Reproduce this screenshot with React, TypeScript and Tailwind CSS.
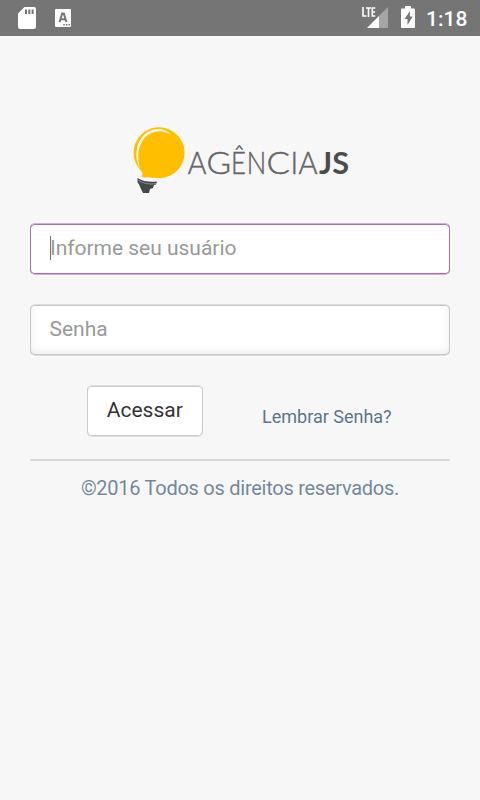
function StatusBar() {
  return (
    <header className="flex h-9 items-center bg-[#757575] text-white">
      <svg className="h-9 w-20" viewBox="0 0 80 36">
        <path d="M24.5 7H34Q36 7 36 9V26.500Q36 29 33.500 29H20.500Q18 29 18 26.500V13.500Z" fill="#fff" />
        <path d="M25 9.500h2v4.500h-2zM28.300 9.500h2v4.500h-2zM31.600 9.500h2v4.500h-2z" fill="#757575" />
        <rect x="55" y="9" width="16" height="18" rx="1" fill="#fff" />
        <path d="M59.600 22L62.200 13.500h1.600l2.600 8.500M60.600 19.300h4.800" fill="none" stroke="#757575" strokeWidth="2" />
        <path d="M63.300 24h1.500v1.400h-1.500zM65.900 24h1.500v1.400h-1.500zM68.500 24H70v1.400h-1.500z" fill="#757575" />
      </svg>
      <svg className="ml-auto h-9 w-[66px]" viewBox="354 0 66 36">
        <path d="M388 7V28H367Z" fill="#a5a5a5" />
        <path d="M379 16V28H367Z" fill="#fff" />
        <path d="M363 7v9h3.500M366 8h5M368.500 8v9M375.300 8H372.300v8h3M372.300 12h2.700" fill="none" stroke="#fff" strokeWidth="1.600" />
        <path d="M405 6h6v2.500h3q1 0 1 1V27q0 1-1 1h-12q-1 0-1-1V9.500q0-1 1-1h3z" fill="#fff" />
        <path d="M410 11l-5.500 8h3v6l5.200-8.500h-2.900z" fill="#757575" />
      </svg>
      <time className="w-[60px] pl-1.5 font-[Roboto,sans-serif] text-[21px] leading-9 font-medium"><span className="relative top-px">1:18</span></time>
    </header>
  );
}

const letters = [
  { char: "A", x: 187.7, scale: 0.92 },
  { char: "G", x: 206.6, scale: 1.08 },
  { char: "Ê", x: 231, scale: 0.83 },
  { char: "N", x: 246.8, scale: 0.83 },
  { char: "C", x: 266.4, scale: 1.12 },
  { char: "I", x: 290.5, scale: 0.95 },
  { char: "A", x: 298.5, scale: 0.94 },
];

function Logo() {
  return (
    <svg className="mx-auto block h-20 w-[230px]" viewBox="125 120 230 80" role="img" aria-label="Agência JS">
      <path d="M141 176Q143 174 141 171A25.500 25.500 0 1 1 158 178L147 177Q143 178 141 176Z" fill="#ffbf00" transform="translate(.5 .2)" />
      <path d="M140 169C135 159 134.500 145 143.500 135.500C152 127 164 127 171.500 135C162 129.500 152 130 144.500 138C137.500 146 137 158 140 169Z" fill="#fffbed" />
      <path d="M137.500 178Q146 183 157 181.500L156 184.500L154 185L153 188L150 189L149 193H143L141 189L139 184.500L137.500 182Z" fill="#444748" />
      <path d="M138 180Q146 185.500 157 183.500" fill="none" stroke="#a6c3d6" strokeWidth=".6" />
      {letters.map((letter) => (
        <text key={letter.x} transform={`translate(${letter.x} 174) scale(${letter.scale} 1)`} fill="#666" stroke="#666" strokeWidth=".5" className="font-[Lato,sans-serif] text-[31px] font-light">{letter.char}</text>
      ))}
      <text x="319" y="174" textLength="30" lengthAdjust="spacingAndGlyphs" fill="#4c4c4c" className="font-[Lato,sans-serif] text-[31px] font-bold">JS</text>
    </svg>
  );
}

export default function App() {
  return (
    <div className="min-h-[800px] bg-[#f7f7f7] font-[Roboto,sans-serif]">
      <StatusBar />
      <main className="px-[30px] pt-[84px]">
        <Logo />
        <form className="pt-[23px]">
          <div className="flex h-[52px] items-center rounded-[5px] border border-x-[#aa6fb0] border-y-[#cfb0d2] bg-white pb-[3px] pl-[19px] shadow-[inset_0_1px_0_#aa6fb0,inset_0_-1px_0_#aa6fb0]">
            <span className="h-6 w-px bg-[#777]" />
            <span className="-ml-px text-[21px] leading-6 tracking-[-0.02px] text-[#999]">Informe seu usuário</span>
          </div>
          <div className="mt-[29px] flex h-[52px] items-center rounded-[5px] border border-x-[#c8c8c8] border-y-[#dcdcdc] bg-white pb-[3px] pl-[18.5px] shadow-[0_1px_0_#fff,inset_0_1px_0_#c8c8c8,inset_0_-1px_0_#c8c8c8,inset_0_-3px_9px_rgba(0,0,0,0.08)]">
            <span className="text-[21px] leading-6 text-[#999]">Senha</span>
          </div>
          <div className="mt-[29px] flex items-center pl-[57px]">
            <button type="button" className="h-[52px] w-[115.5px] rounded-[5px] border border-x-[#ccc] border-y-[#dedede] bg-white pb-[2px] text-[21px] leading-6 text-[#333] shadow-[inset_0_1px_0_#ccc,inset_0_-1px_0_#ccc]">Acessar</button>
            <a className="ml-[59.5px] pt-3 text-[18px] leading-6 text-[#5a738e] [text-shadow:0_1px_0_#fff]">Lembrar Senha?</a>
          </div>
        </form>
        <footer className="mt-[22px] border-t-2 border-[#d8d8d8] pt-[14px] text-center text-[20px] leading-[26px] tracking-[-0.26px] text-[#73879c] [text-shadow:0_1px_0_#fff]">©2016 Todos os direitos reservados.</footer>
      </main>
    </div>
  );
}
